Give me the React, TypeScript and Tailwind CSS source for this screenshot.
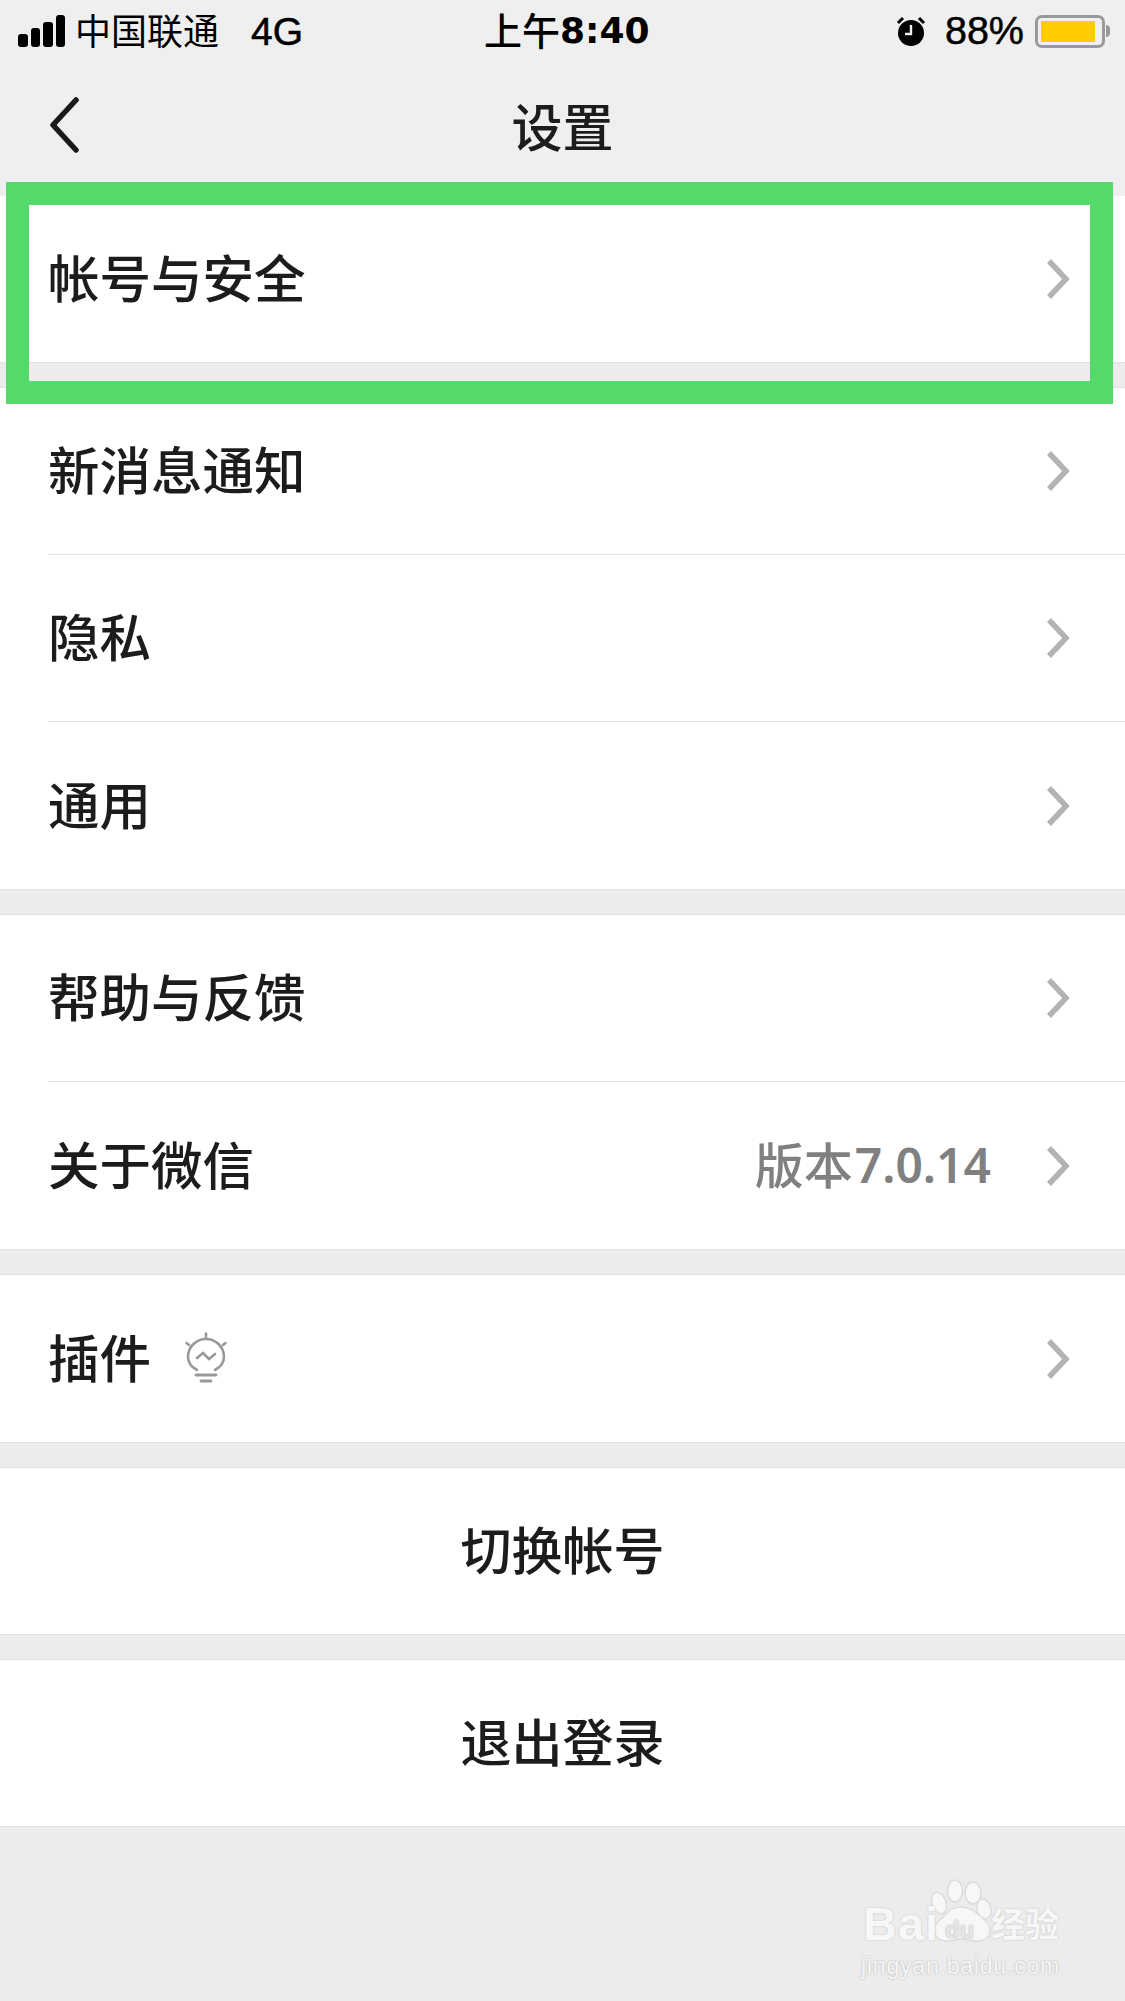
import React from "react";

const cjk = "font-['Noto_Sans_CJK_SC','Noto_Sans',sans-serif]";

function Chevron() {
  return (
    <svg width="24" height="42" viewBox="0 0 24 42" className="shrink-0">
      <path d="M3 3 L20 21 L3 39" fill="none" stroke="#b3b3b3" strokeWidth="5.5" />
    </svg>
  );
}

function Row({ label, value, version, icon, divider, center, h = "h-[167px]" }: { label: string; value?: string; version?: string; icon?: boolean; divider?: boolean; center?: boolean; h?: string }) {
  if (center) {
    return (
      <div className={`${h} bg-white flex items-center justify-center`}>
        <span className="text-[51px] leading-none font-medium text-[#1c1c1c] mb-[6px]">{label}</span>
      </div>
    );
  }
  return (
    <div className={`${h} bg-white pl-[48px] flex flex-col`}>
      <div className="flex-1 flex items-center pr-[55px]">
        <span className="text-[51.5px] font-medium text-[#1c1c1c] leading-none mb-[6px]">{label}</span>
        {icon && <Bulb />}
        <div className="flex-1" />
        {value && (
          <span className="flex items-center text-[#808080] mr-[55px] leading-none">
            <span className="text-[49px] font-medium mb-[6px]">{value}</span>
            <span className="text-[48px] font-semibold font-['Noto_Sans',sans-serif] mb-[2px] ml-[2px]">{version}</span>
          </span>
        )}
        <Chevron />
      </div>
      {divider && <div className="h-[1px] bg-[#e3e3e3]" />}
    </div>
  );
}

function Bulb() {
  return (
    <svg width="44" height="52" viewBox="0 0 44 52" className="ml-[33px] mb-[2px]" fill="none" stroke="#999" strokeLinecap="round">
      <path d="M22 1.5v4M2.5 11l2.5 2M41.5 11l-2.5 2" strokeWidth="2.6" />
      <path d="M13 38C7.500 35 4 30 4 25a18 18 0 0 1 36 0c0 5-3.500 10-9 13" strokeWidth="2.6" />
      <path d="M13 26l6-5 6 6 6-5" strokeWidth="2.6" />
      <path d="M12 43h20" strokeWidth="2.8" />
      <path d="M17 49h10" strokeWidth="2.8" />
    </svg>
  );
}

function Gap() {
  return <div className="h-[26px] bg-[#ececec] border-y border-[#e3e3e3]" />;
}

function Signal() {
  return (
    <div className="flex items-end gap-[3px] h-[32px] mr-[10px]">
      <div className="w-[9.500px] h-[13px] rounded-[3px] bg-black" />
      <div className="w-[9.500px] h-[19px] rounded-[3px] bg-black" />
      <div className="w-[9.500px] h-[25px] rounded-[3px] bg-black" />
      <div className="w-[9.500px] h-[32px] rounded-[3px] bg-black" />
    </div>
  );
}

function Alarm() {
  return (
    <svg width="30" height="32" viewBox="0 0 30 32" className="mr-[19px]">
      <circle cx="15" cy="18" r="13" fill="#000" />
      <path d="M15 10v9H9" fill="none" stroke="#efefef" strokeWidth="2.4" />
      <path d="M2 8l5-5M28 8l-5-5" stroke="#000" strokeWidth="3" />
    </svg>
  );
}

function Battery() {
  return (
    <div className="flex items-center ml-[11px]">
      <div className="w-[70px] h-[33px] rounded-[7px] border-[3px] border-[#999] p-[3px] flex">
        <div className="w-[54px] h-full bg-[#ffcc00]" />
      </div>
      <div className="w-[4px] h-[12px] ml-[1px] rounded-r-full bg-[#999]" />
    </div>
  );
}

function Watermark() {
  return (
    <div className="absolute left-[860px] top-[1878px] w-[210px] h-[102px]">
      <svg width="200" height="70" viewBox="0 0 200 70" className="absolute left-0 top-0" stroke="#dcdcdc" strokeWidth="1.5" fill="#f7f7f7">
        <ellipse cx="79" cy="25" rx="7" ry="11" transform="rotate(-20 79 25)" />
        <ellipse cx="95" cy="13" rx="7.500" ry="11" />
        <ellipse cx="113" cy="15" rx="8" ry="11" />
        <ellipse cx="124" cy="31" rx="7" ry="10" transform="rotate(-15 124 31)" />
        <path d="M100 29c-10 0-12 6-20 13-8 6-8 20 6 21 8 0 12-2 16-2s10 3 18 2c13-2 12-15 5-21-8-6-12-13-25-13z" />
      </svg>
      <span className="absolute left-[3px] top-[23px] text-[47px] leading-[46px] font-bold text-[#f7f7f7] font-['Liberation_Sans',sans-serif] [text-shadow:0_0_2px_#bdbdbd] tracking-[1px]">Bai</span>
      <span className="absolute left-[85px] top-[40px] text-[24px] leading-[24px] font-bold text-[#e6e6e6] font-['Liberation_Sans',sans-serif] [text-shadow:0_0_2px_#a8a8a8]">du</span>
      <span className="absolute left-[131px] top-[25px] text-[34px] leading-[40px] font-bold text-[#f7f7f7] [text-shadow:0_0_2px_#bdbdbd]">经验</span>
      <span className="absolute left-[1px] top-[74px] text-[23px] leading-[28px] text-[#f7f7f7] font-['Liberation_Sans',sans-serif] [text-shadow:0_0_2px_#a8a8a8] tracking-[0.8px]">jingyan.baidu.com</span>
    </div>
  );
}

export default function App() {
  return (
    <div className={`relative w-[1125px] h-[2001px] overflow-hidden bg-[#ececec] ${cjk}`}>
      <div className="h-[196px] bg-[#efefef] flex flex-col">
        <div className="h-[62px] flex items-center pl-[18px] pr-[15px] text-black">
          <Signal />
          <span className="text-[36px] leading-none mb-[5px]">中国联通</span>
          <span className="text-[39px] leading-none ml-[32px] font-['Liberation_Sans',sans-serif] [-webkit-text-stroke:0.5px_#000]">4G</span>
          <div className="flex-1 flex justify-start ml-[181px]">
            <span className="flex items-center text-[38px] leading-none font-medium">
              <span className="mb-[5px]">上午</span><span className="font-['DejaVu_Sans',sans-serif] font-bold text-[36px]">8:40</span>
            </span>
          </div>
          <Alarm />
          <span className="text-[39.500px] leading-none font-['Liberation_Sans',sans-serif] [-webkit-text-stroke:0.5px_#000]">88%</span>
          <Battery />
        </div>
        <div className="flex-1 relative flex items-center justify-center">
          <svg width="34" height="56" viewBox="0 0 34 56" className="absolute left-[47px] top-[35px]">
            <path d="M29 3 L6 28 L29 53" fill="none" stroke="#1a1a1a" strokeWidth="5.5" strokeLinecap="round" strokeLinejoin="round" />
          </svg>
          <span className="text-[51px] leading-none font-medium text-[#1c1c1c] mb-[7px]">设置</span>
        </div>
      </div>

      <Row label="帐号与安全" h="h-[166px]" />
      <Gap />
      <Row label="新消息通知" divider />
      <Row label="隐私" divider />
      <Row label="通用" />
      <Gap />
      <Row label="帮助与反馈" divider />
      <Row label="关于微信" value="版本" version="7.0.14" />
      <Gap />
      <Row label="插件" icon />
      <Gap />
      <Row label="切换帐号" center h="h-[166px]" />
      <Gap />
      <Row label="退出登录" center h="h-[166px]" />
      <div className="h-[1px] bg-[#e3e3e3]" />

      <div className="absolute left-[6px] top-[182px] w-[1107px] h-[222px] border-[23px] border-[#55d96b]" />
      <Watermark />
    </div>
  );
}
